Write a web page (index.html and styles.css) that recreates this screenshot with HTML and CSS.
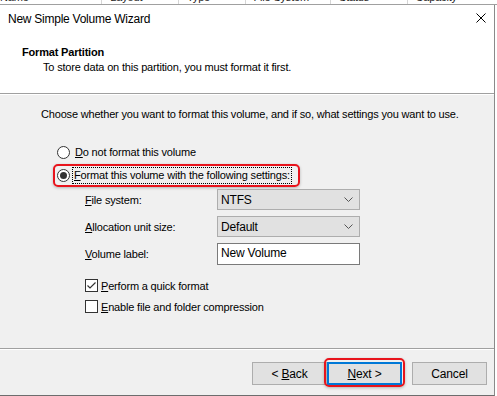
FILE: index.html
```html
<!DOCTYPE html>
<html>
<head>
    <title>New Simple Volume Wizard</title>
    <link rel="stylesheet" href="styles.css">
</head>
<body>
    <div class="behind">
        <div class="col col-name">Name</div>
        <div class="col col-layout">Layout</div>
        <div class="col col-type">Type</div>
        <div class="col col-fs">File System</div>
        <div class="col col-status">Status</div>
        <div class="col col-cap">Capacity</div>
    </div>

    <div class="dialog">
        <div class="titlebar">
            <span class="title">New Simple Volume Wizard</span>
            <svg class="close" width="10" height="10" viewBox="0 0 10 10">
                <path d="M0.5 0.5 L9.5 9.5 M9.5 0.5 L0.5 9.5" stroke="#000" stroke-width="1" fill="none"/>
            </svg>
        </div>

        <div class="header">
            <div class="header-title">Format Partition</div>
            <div class="header-sub">To store data on this partition, you must format it first.</div>
        </div>

        <div class="content">
            <div class="intro">Choose whether you want to format this volume, and if so, what settings you want to use.</div>

            <div class="option">
                <span class="radio"></span>
                <span class="option-text"><u>D</u>o not format this volume</span>
            </div>
            <div class="option marked">
                <span class="radio checked"></span>
                <span class="option-text focused"><u>F</u>ormat this volume with the following settings:</span>
            </div>

            <div class="settings">
                <label><u>F</u>ile system:</label>
                <div class="select">
                    <span>NTFS</span>
                    <svg width="9" height="5" viewBox="0 0 9 5"><path d="M0.5 0.5 L4.5 4.5 L8.5 0.5" stroke="#555" fill="none"/></svg>
                </div>

                <label><u>A</u>llocation unit size:</label>
                <div class="select">
                    <span>Default</span>
                    <svg width="9" height="5" viewBox="0 0 9 5"><path d="M0.5 0.5 L4.5 4.5 L8.5 0.5" stroke="#555" fill="none"/></svg>
                </div>

                <label><u>V</u>olume label:</label>
                <div class="textbox">New Volume</div>
            </div>

            <div class="checks">
                <div class="check">
                    <span class="box">
                        <svg width="11" height="11" viewBox="0 0 11 11"><path d="M1.5 5.5 L4 8 L9.5 2.5" stroke="#333" stroke-width="1.2" fill="none"/></svg>
                    </span>
                    <span><u>P</u>erform a quick format</span>
                </div>
                <div class="check">
                    <span class="box"></span>
                    <span><u>E</u>nable file and folder compression</span>
                </div>
            </div>
        </div>

        <div class="footer">
            <div class="btn"><span>&lt; <u>B</u>ack</span></div>
            <div class="btn default"><span><u>N</u>ext &gt;</span></div>
            <div class="btn cancel"><span>Cancel</span></div>
        </div>
    </div>
</body>
</html>
```

FILE: styles.css
```css
body {
    margin: 0;
    padding: 0;
    background-color: #fff;
    font-family: 'Liberation Sans', Arial, sans-serif;
    font-size: 11px;
    letter-spacing: -0.18px;
    color: #000;
}

u {
    text-decoration: underline;
    text-underline-offset: 1px;
}

/* list header peeking out above the dialog */
.behind {
    display: flex;
    height: 4px;
    overflow: hidden;
    border-bottom: 1px solid #a0a0a0;
}

.col {
    box-sizing: border-box;
    height: 4px;
    line-height: 12px;
    padding-left: 8px;
    border-right: 1px solid #d6d6d6;
    color: #222;
}

.col::before {
    content: "";
    display: block;
    margin-top: -9px;
}

.col-name { width: 103px; padding-left: 0; text-indent: -12px; }
.col-layout { width: 77px; }
.col-type { width: 67px; }
.col-fs { width: 86px; }
.col-status { width: 77px; }
.col-cap { width: 90px; border-right: none; }

.dialog {
    width: 495px;
    height: 391px;
    box-sizing: border-box;
    border-right: 1px solid #8a8a8a;
    border-bottom: 1px solid #6d6d6d;
    display: flex;
    flex-direction: column;
    background-color: #f0f0f0;
}

.titlebar {
    height: 27px;
    flex-shrink: 0;
    background-color: #fff;
    display: flex;
    align-items: center;
    justify-content: space-between;
    padding: 0 8px;
    font-size: 12px;
    letter-spacing: -0.25px;
}

.close {
    margin-top: -1px;
}

.header {
    height: 62px;
    flex-shrink: 0;
    box-sizing: border-box;
    background-color: #fff;
    padding-top: 13px;
    border-bottom: 1px solid #a0a0a0;
    line-height: 15px;
}

.header-title {
    font-weight: bold;
    padding-left: 22px;
}

.header-sub {
    padding-left: 43px;
}

.content {
    height: 255px;
    flex-shrink: 0;
    box-sizing: border-box;
    border-top: 1px solid #fff;
    border-bottom: 1px solid #a0a0a0;
    padding-top: 11px;
}

.intro {
    line-height: 16px;
    padding-left: 41px;
    margin-bottom: 21px;
}

.option {
    display: flex;
    align-items: center;
    height: 19px;
    margin-left: 55px;
    padding: 0 2px;
    width: fit-content;
}

.option.marked {
    margin-top: 2px;
    margin-left: 53px;
    padding: 0 6px 0 2px;
    border: 2px solid #e8141c;
    border-radius: 5px;
    box-shadow: 0 1px 3px rgba(0, 0, 0, 0.25);
}

.radio {
    box-sizing: border-box;
    width: 13px;
    height: 13px;
    border: 1px solid #333;
    border-radius: 50%;
    background-color: #fff;
    display: flex;
    align-items: center;
    justify-content: center;
}

.radio.checked::after {
    content: "";
    width: 7px;
    height: 7px;
    border-radius: 50%;
    background-color: #333;
}

.option-text {
    margin-left: 3px;
    padding: 0 1px;
    line-height: 15px;
    border: 1px solid transparent;
}

.option-text.focused {
    margin-left: 2px;
    border: 1px dotted #000;
}

.settings {
    display: grid;
    grid-template-columns: 132px 143px;
    grid-template-rows: 21px 21px 22px;
    row-gap: 6px;
    margin: 2px 0 0 85px;
    align-items: center;
}

.select {
    box-sizing: border-box;
    height: 21px;
    background-color: #e1e1e1;
    border: 1px solid #adadad;
    display: flex;
    align-items: center;
    justify-content: space-between;
    padding: 0 6px 0 3px;
    font-size: 12px;
}

.textbox {
    box-sizing: border-box;
    height: 22px;
    background-color: #fff;
    border: 1px solid #7a7a7a;
    padding: 2px 3px;
    font-size: 12px;
}

.checks {
    margin: 14px 0 0 85px;
    display: flex;
    flex-direction: column;
    gap: 8px;
}

.check {
    display: flex;
    align-items: center;
    height: 13px;
    gap: 3px;
}

.box {
    box-sizing: border-box;
    width: 13px;
    height: 13px;
    border: 1px solid #333;
    background-color: #fff;
    display: flex;
    align-items: center;
    justify-content: center;
}

.footer {
    flex: 1;
    border-top: 1px solid #fff;
    display: flex;
    justify-content: flex-end;
    align-items: flex-start;
    padding: 12px 7px 0 0;
}

.btn {
    box-sizing: border-box;
    width: 75px;
    height: 23px;
    background-color: #e1e1e1;
    border: 1px solid #adadad;
    display: flex;
    align-items: center;
    justify-content: center;
    font-size: 12px;
    position: relative;
}

.btn.default {
    border: 2px solid #0078d7;
}

.btn.default::after {
    content: "";
    position: absolute;
    top: -6px;
    bottom: -4px;
    left: -5px;
    right: -5px;
    border: 2px solid #e8141c;
    border-radius: 5px;
    box-shadow: 0 1px 3px rgba(0, 0, 0, 0.25);
}

.btn.cancel {
    margin-left: 10px;
}
```
